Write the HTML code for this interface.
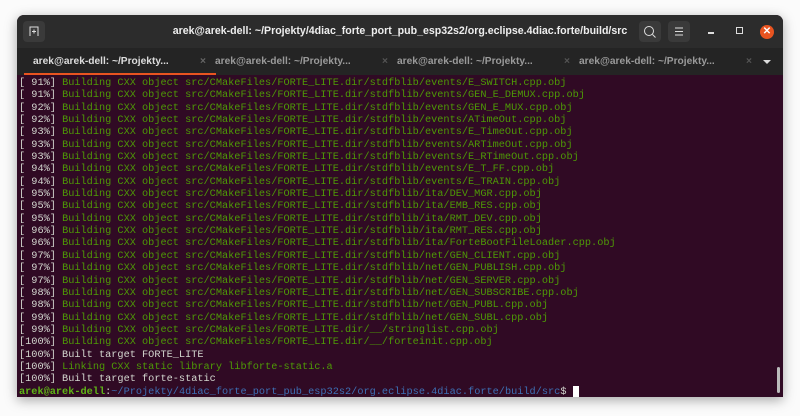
<!DOCTYPE html>
<html><head><style>
body{margin:0;width:800px;height:416px;background:#fbfbfb;position:relative;overflow:hidden;font-family:"Liberation Sans",sans-serif}
.win{position:absolute;left:17px;top:15px;width:766px;height:382px;border-radius:7px 7px 0 0;overflow:hidden;box-shadow:0 3px 12px rgba(0,0,0,.35);background:#300a24}
.title{height:33px;background:#2c2c2c;position:relative;color:#eee;font-weight:bold;font-size:10.6px}
.title .t{position:absolute;left:0;right:0;top:10px;text-align:center}
.btn{position:absolute;top:6px;width:22px;height:21px;background:#3a3a3a;border-radius:4px}
.tabs{height:27px;background:#242424;position:relative;font-size:10.2px;font-weight:bold;color:#9a9a9a}
.tab{position:absolute;top:8px}
.term{position:absolute;top:61px;left:0;right:0;bottom:0;padding:1px 2px;font-family:"Liberation Mono",monospace;font-size:10.25px;line-height:12.35px;color:#d3d7cf;white-space:pre}
.g{color:#4e9a06}.b{color:#3d6fb4}.pb{color:#5fb516;font-weight:bold}
</style></head><body>
<div class="win">
<div class="title">
<div class="btn" style="left:6px"><svg width="22" height="21"><path d="M7 15V6h8v9M11 8.5v4M9 10.5h4" stroke="#ddd" fill="none" stroke-width="1"/></svg></div>
<div class="t">arek@arek-dell: ~/Projekty/4diac_forte_port_pub_esp32s2/org.eclipse.4diac.forte/build/src</div>
<div class="btn" style="left:622px"><svg width="22" height="21"><circle cx="10" cy="10" r="4.5" stroke="#ddd" fill="none"/><path d="M13.5 13.5l3 3" stroke="#ddd"/></svg></div>
<div class="btn" style="left:651px"><svg width="22" height="21"><path d="M7 7h8M7 10.5h8M7 14h8" stroke="#ddd"/></svg></div>
<div style="position:absolute;left:691px;top:17px;width:6px;height:1.5px;background:#ddd"></div>
<div style="position:absolute;left:719px;top:12px;width:5px;height:5px;border:1px solid #ddd"></div>
<div style="position:absolute;left:743px;top:10px;width:14px;height:14px;border-radius:50%;background:#e95420;color:#fff;font-size:10px;text-align:center;line-height:14px">✕</div>
</div>
<div class="tabs">
<div class="tab" style="left:16px;color:#ddd">arek@arek-dell: ~/Projekty...</div><div class="tab" style="left:183px;color:#666">×</div>
<div style="position:absolute;left:7px;top:25px;width:192px;height:2px;background:#e95420"></div>
<div class="tab" style="left:198px">arek@arek-dell: ~/Projekty...</div><div class="tab" style="left:365px;color:#555">×</div>
<div class="tab" style="left:380px">arek@arek-dell: ~/Projekty...</div><div class="tab" style="left:547px;color:#555">×</div>
<div class="tab" style="left:562px">arek@arek-dell: ~/Projekty...</div><div class="tab" style="left:729px;color:#555">×</div>
<div style="position:absolute;left:746px;top:12px;border:4px solid transparent;border-top:4px solid #ddd;border-bottom:0"></div>
</div>
<div class="term">[ 91%] <span class="g">Building CXX object src/CMakeFiles/FORTE_LITE.dir/stdfblib/events/E_SWITCH.cpp.obj</span>
[ 91%] <span class="g">Building CXX object src/CMakeFiles/FORTE_LITE.dir/stdfblib/events/GEN_E_DEMUX.cpp.obj</span>
[ 92%] <span class="g">Building CXX object src/CMakeFiles/FORTE_LITE.dir/stdfblib/events/GEN_E_MUX.cpp.obj</span>
[ 92%] <span class="g">Building CXX object src/CMakeFiles/FORTE_LITE.dir/stdfblib/events/ATimeOut.cpp.obj</span>
[ 93%] <span class="g">Building CXX object src/CMakeFiles/FORTE_LITE.dir/stdfblib/events/E_TimeOut.cpp.obj</span>
[ 93%] <span class="g">Building CXX object src/CMakeFiles/FORTE_LITE.dir/stdfblib/events/ARTimeOut.cpp.obj</span>
[ 93%] <span class="g">Building CXX object src/CMakeFiles/FORTE_LITE.dir/stdfblib/events/E_RTimeOut.cpp.obj</span>
[ 94%] <span class="g">Building CXX object src/CMakeFiles/FORTE_LITE.dir/stdfblib/events/E_T_FF.cpp.obj</span>
[ 94%] <span class="g">Building CXX object src/CMakeFiles/FORTE_LITE.dir/stdfblib/events/E_TRAIN.cpp.obj</span>
[ 95%] <span class="g">Building CXX object src/CMakeFiles/FORTE_LITE.dir/stdfblib/ita/DEV_MGR.cpp.obj</span>
[ 95%] <span class="g">Building CXX object src/CMakeFiles/FORTE_LITE.dir/stdfblib/ita/EMB_RES.cpp.obj</span>
[ 95%] <span class="g">Building CXX object src/CMakeFiles/FORTE_LITE.dir/stdfblib/ita/RMT_DEV.cpp.obj</span>
[ 96%] <span class="g">Building CXX object src/CMakeFiles/FORTE_LITE.dir/stdfblib/ita/RMT_RES.cpp.obj</span>
[ 96%] <span class="g">Building CXX object src/CMakeFiles/FORTE_LITE.dir/stdfblib/ita/ForteBootFileLoader.cpp.obj</span>
[ 97%] <span class="g">Building CXX object src/CMakeFiles/FORTE_LITE.dir/stdfblib/net/GEN_CLIENT.cpp.obj</span>
[ 97%] <span class="g">Building CXX object src/CMakeFiles/FORTE_LITE.dir/stdfblib/net/GEN_PUBLISH.cpp.obj</span>
[ 97%] <span class="g">Building CXX object src/CMakeFiles/FORTE_LITE.dir/stdfblib/net/GEN_SERVER.cpp.obj</span>
[ 98%] <span class="g">Building CXX object src/CMakeFiles/FORTE_LITE.dir/stdfblib/net/GEN_SUBSCRIBE.cpp.obj</span>
[ 98%] <span class="g">Building CXX object src/CMakeFiles/FORTE_LITE.dir/stdfblib/net/GEN_PUBL.cpp.obj</span>
[ 99%] <span class="g">Building CXX object src/CMakeFiles/FORTE_LITE.dir/stdfblib/net/GEN_SUBL.cpp.obj</span>
[ 99%] <span class="g">Building CXX object src/CMakeFiles/FORTE_LITE.dir/__/stringlist.cpp.obj</span>
[100%] <span class="g">Building CXX object src/CMakeFiles/FORTE_LITE.dir/__/forteinit.cpp.obj</span>
[100%] Built target FORTE_LITE
[100%] <span class="g">Linking CXX static library libforte-static.a</span>
[100%] Built target forte-static
<span class="pb">arek@arek-dell</span>:<span class="b">~/Projekty/4diac_forte_port_pub_esp32s2/org.eclipse.4diac.forte/build/src</span>$ <span style="background:#fff"> </span></div>
<div style="position:absolute;left:760px;top:352px;width:3px;height:26px;background:#bbb;border-radius:2px"></div>
</div>
</body></html>
